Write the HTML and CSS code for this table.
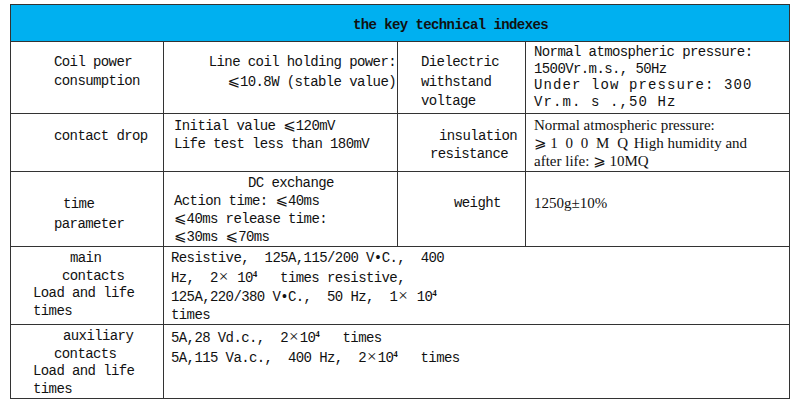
FILE: index.html
```html
<!DOCTYPE html>
<html lang="en">

<head>
  <meta charset="UTF-8">
  <title>the key technical indexes</title>
  <link rel="stylesheet" href="styles.css">
</head>

<body>
  <table class="spec">
    <colgroup>
      <col class="col1">
      <col class="col2">
      <col class="col3">
      <col class="col4">
    </colgroup>
    <tr class="head">
      <th colspan="4">the key technical indexes</th>
    </tr>

    <!-- row 1 -->
    <tr class="r1">
      <td class="name lh19 pad-m">
        <span class="i-a">Coil power</span>
        <span class="i-a">consumption</span>
      </td>
      <td class="value right lh19 pad-m">
        Line coil holding power:<br>
        <span class="le">⩽</span>10.8W (stable value)
      </td>
      <td class="name2 lh195 pad-m">
        Dielectric<br>withstand<br>voltage
      </td>
      <td class="value lh165">
        Normal atmospheric pressure:<br>
        1500Vr.m.s., 50Hz<br>
        <span class="wide">Under low pressure: 300</span><br>
        <span class="wide">Vr.m. s .,50 Hz</span>
      </td>
    </tr>

    <!-- row 2 -->
    <tr class="r2">
      <td class="name pad-l">
        <span class="i-a">contact drop</span>
      </td>
      <td class="value ind">
        Initial value <span class="le">⩽</span>120mV<br>
        Life test less than 180mV
      </td>
      <td class="name2 pad-l">
        <span class="i-c">insulation</span>
        <span class="i-b">resistance</span>
      </td>
      <td class="value serif lh18">
        Normal atmospheric pressure:<br>
        <span class="le">⩾</span> <span class="spread">1 0 0 M Q</span> High humidity and<br>
        after life: <span class="le">⩾</span> 10MQ
      </td>
    </tr>

    <!-- row 3 -->
    <tr class="r3">
      <td class="name lh20 pad-xl">
        <span class="i-e">time</span>
        <span class="i-a">parameter</span>
      </td>
      <td class="value ind lh17 pad-s">
        <span class="i-f">DC exchange</span>
        Action time: <span class="le">⩽</span>40ms<br>
        <span class="le">⩽</span>40ms release time:<br>
        <span class="le">⩽</span>30ms <span class="le">⩽</span>70ms
      </td>
      <td class="name2 pad-xl">
        <span class="i-d">weight</span>
      </td>
      <td class="value serif pad-xl">1250g±10%</td>
    </tr>

    <!-- row 4 -->
    <tr class="r4">
      <td class="name lh175 pad-s3">
        <span class="i-h">main</span>
        <span class="i-g">contacts</span>
        <span>Load and life</span>
        <span>times</span>
      </td>
      <td class="value ind2 pad-s3" colspan="3">
        <span class="ln">Resistive,  125A,115/200 V•C.,  400</span>
        <span class="ln">Hz,  2<span class="x">×</span> 10<sup>4</sup>   times resistive,</span>
        <span class="ln">125A,220/380 V•C.,  50 Hz,  1<span class="x">×</span> 10<sup>4</sup></span>
        <span class="ln">times</span>
      </td>
    </tr>

    <!-- row 5 -->
    <tr class="r5">
      <td class="name lh175 pad-s3">
        <span class="i-e">auxiliary</span>
        <span class="i-a">contacts</span>
        <span>Load and life</span>
        <span>times</span>
      </td>
      <td class="value ind2 pad-s3" colspan="3">
        <span class="ln">5A,28 Vd.c.,  2<span class="x">×</span>10<sup>4</sup>   times</span>
        <span class="ln">5A,115 Va.c.,  400 Hz,  2<span class="x">×</span>10<sup>4</sup>   times</span>
      </td>
    </tr>
  </table>
</body>

</html>
```

FILE: styles.css
```css
* {
  box-sizing: border-box;
  margin: 0;
  padding: 0;
}

body {
  background-color: #fff;
  color: #111;
  font-family: "Liberation Mono", monospace;
  font-size: 14px;
  letter-spacing: -0.6px;
}

.spec {
  margin: 4px 0 0 10px;
  width: 779px;
  table-layout: fixed;
  border-collapse: collapse;
}

.spec .col1 { width: 153px; }
.spec .col2 { width: 234px; }
.spec .col3 { width: 128px; }
.spec .col4 { width: 264px; }

.spec th,
.spec td {
  border: 1px solid #333;
  vertical-align: top;
  padding-top: 2px;
  line-height: 18px;
}

.spec .head {
  height: 37px;
}

.spec .head th {
  background-color: #00b0f0;
  text-align: left;
  vertical-align: middle;
  padding: 4px 0 0 342px;
  font-weight: bold;
}

.spec .r1 { height: 72px; }
.spec .r2 { height: 58px; }
.spec .r3 { height: 72px; }
.spec .r4 { height: 75px; }
.spec .r5 { height: 74px; }

/* first column: every line has its own indent */
.spec .name {
  padding-left: 22px;
}

.spec .name span {
  display: block;
}

.spec .i-a { margin-left: 21px; }
.spec .i-e { margin-left: 30px; }
.spec .i-g { margin-left: 29px; }
.spec .i-h { margin-left: 37px; }

.spec .name2 {
  padding-left: 23px;
}

.spec .name2 span {
  display: block;
}

.spec .i-b { margin-left: 9px; }
.spec .i-c { margin-left: 18px; }
.spec .i-d { margin-left: 33px; }

.spec .value {
  padding-left: 8px;
}

.spec .value.right {
  text-align: right;
  padding-right: 1px;
}

.spec .value.ind { padding-left: 10px; }
.spec .value.ind2 { padding-left: 7px; }

.spec .ln {
  display: block;
  white-space: pre;
  line-height: 17.5px;
}

.spec .i-f {
  display: block;
  margin-left: 74px;
}

.spec .serif {
  font-family: "Liberation Serif", serif;
  font-size: 15px;
  letter-spacing: 0;
}

.spec .wide {
  letter-spacing: 1.1px;
}

.spec .spread {
  letter-spacing: 2px;
}

.spec .le {
  font-family: "DejaVu Sans", sans-serif;
  font-size: 15px;
  letter-spacing: 0;
}

.spec .x {
  font-family: "Liberation Serif", serif;
  font-size: 17px;
  letter-spacing: 0;
  padding: 0 1px;
}

.spec sup {
  font-family: "Liberation Serif", serif;
  font-size: 9px;
  font-weight: bold;
  line-height: 0;
  vertical-align: 5px;
}

.spec .pad-s3 { padding-top: 3px; }
.spec .pad-s { padding-top: 3px; }
.spec .pad-m { padding-top: 11px; }
.spec .pad-l { padding-top: 13px; }
.spec .pad-xl { padding-top: 22px; }

.spec .lh165 { line-height: 16.5px; }
.spec .lh17 { line-height: 17px; }
.spec .lh175 { line-height: 17.5px; }
.spec .lh18 { line-height: 18px; }
.spec .lh19 { line-height: 19px; }
.spec .lh195 { line-height: 19.5px; }
.spec .lh20 { line-height: 20px; }
```
